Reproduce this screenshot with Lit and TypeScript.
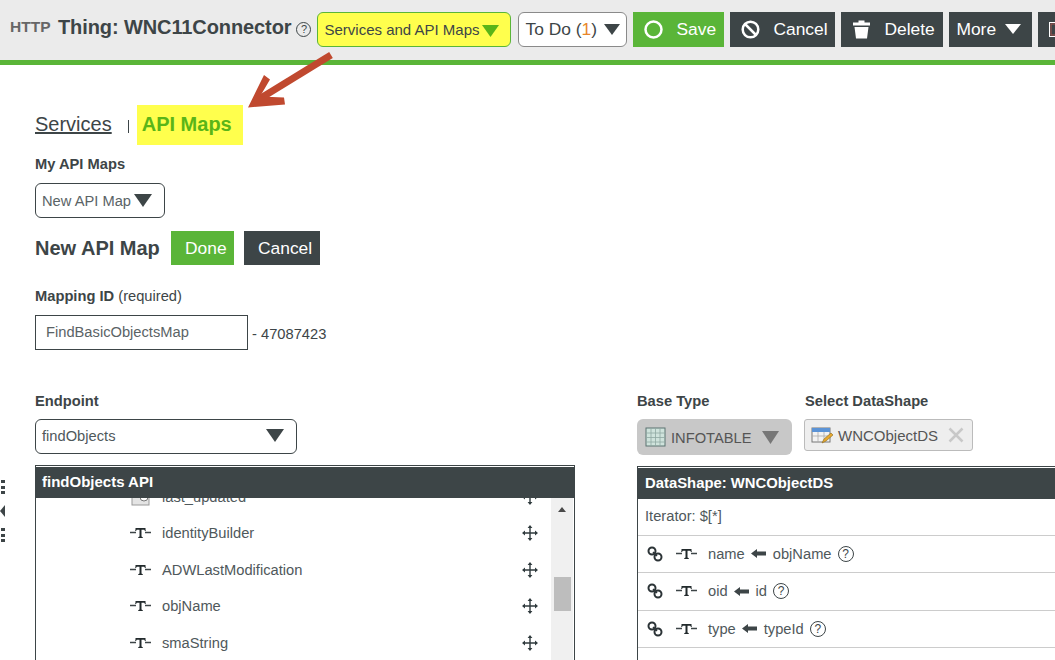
import { LitElement, html, css, svg } from "lit";
import { customElement } from "lit/decorators.js";

const tIcon = html`<svg class="ti" width="21" height="12" viewBox="0 0 21 12"><path d="M0 5.500h6M15 5.500h6" stroke="#3d4547" stroke-width="1.500"/><path d="M5.500 1h10v1.200l.3 1.800h-.8l-.8-1.200h-2.700v6.700l1.300.7V11H8.200v-.8l1.300-.7V2.800H6.800L6 4h-.8l.3-1.800z" fill="#222a2c"/></svg>`;
const moveIcon = html`<svg class="mv" width="16" height="16" viewBox="0 0 16 16"><path d="M8 1.500v13M1.500 8h13" stroke="#2f3a3d" stroke-width="1.400"/><path d="M8 0l2.400 3H5.600zM8 16l-2.400-3h4.800zM0 8l3-2.400v4.800zM16 8l-3 2.400V5.600z" fill="#2f3a3d"/></svg>`;
const linkIcon = html`<svg class="lk" width="16" height="16" viewBox="0 0 16 16" fill="none" stroke="#2b3336" stroke-width="2"><circle cx="5" cy="5" r="3.500"/><circle cx="11" cy="11" r="3.500"/><path d="M6 6l4 4" stroke-width="1.500"/></svg>`;
const larrow = html`<svg class="la" width="15" height="9" viewBox="0 0 15 9"><path d="M0 4.500L6 0v2.500h9v4H6V9z" fill="#3d4547"/></svg>`;
const qIcon = (s = 16) => html`<span class="q" style="width:${s}px;height:${s}px;font-size:${s - 4}px">?</span>`;
const tri = (w: number, h: number, c: string) => html`<svg class="tri" width="${w}" height="${h}" viewBox="0 0 ${w} ${h}"><path d="M0 0H${w}L${w / 2} ${h}z" fill="${c}"/></svg>`;
const rows = ["identityBuilder", "ADWLastModification", "objName", "smaString"];
const mapped = [["name", "objName"], ["oid", "id"], ["type", "typeId"]];

@customElement("app-root")
export class AppRoot extends LitElement {
  static styles = css`
    :host { display: block; position: relative; width: 1055px; height: 660px; overflow: hidden; background: #fff; color: #3d4547; font: 14.7px "Liberation Sans", Arial, sans-serif; }
    .top { display: flex; align-items: center; height: 60px; box-sizing: border-box; background: #ebebeb; padding: 0 0 2px 10px; white-space: nowrap; }
    .bar { height: 5px; background: #5ab538; }
    .http { font-weight: 700; font-size: 15.5px; color: #666; width: 48px; margin-top: -5px; }
    .title { font-weight: 700; font-size: 20px; letter-spacing: -0.1px; color: #3d4547; margin-top: -3px; }
    .q { display: inline-flex; align-items: center; justify-content: center; box-sizing: border-box; border: 1px solid #3d4547; border-radius: 50%; line-height: 1; color: #3d4547; flex: none; }
    .top .q { margin: 0 6px 0 5px; }
    .sa { display: flex; align-items: center; gap: 2px; box-sizing: border-box; width: 194px; height: 35px; padding-left: 6px; background: #ffff4d; border: 1px solid #5ab538; border-radius: 6px; font-size: 15px; }
    .sa svg { margin-top: 3px; }
    .todo { display: flex; align-items: center; justify-content: space-between; box-sizing: border-box; width: 109px; height: 35px; margin-left: 7px; padding: 0 6px; background: #fff; border: 1px solid #8a8a8a; border-radius: 6px; font-size: 17.4px; }
    .todo b { font-weight: 400; color: #e8862a; }
    .btn { display: flex; align-items: center; box-sizing: border-box; height: 35px; margin-left: 6px; color: #fff; background: #3d4547; font-size: 17.4px; }
    .btn.green { background: #5ab538; }
    .btn svg { flex: none; }
    .save { width: 91px; padding-left: 11px; gap: 13px; }
    .cancel { width: 105px; padding-left: 11px; gap: 13px; }
    .delete { width: 102px; padding-left: 11px; gap: 13px; }
    .more { width: 83px; padding-left: 7px; gap: 9px; }
    .extra { width: 30px; padding-left: 11px; margin-right: -30px; flex: none; }
    .main { padding: 40px 0 0 35px; }
    .tabs { display: flex; align-items: center; height: 40px; }
    .tabs u { font-size: 20px; padding-bottom: 2px; }
    .sep { width: 1px; height: 13px; background: #3d4547; margin: 2px 8px 0 16px; }
    .hl { display: flex; align-items: center; box-sizing: border-box; width: 106px; height: 40px; padding: 0 0 2px 5px; background: #ffff4d; color: #5ab518; font-size: 20px; font-weight: 700; }
    .lbl { font-weight: 700; font-size: 14.7px; line-height: 16px; }
    .lbl span { font-weight: 400; }
    .my { margin-top: 11px; }
    .sel { display: flex; align-items: center; box-sizing: border-box; height: 35px; border: 1px solid #3d4547; border-radius: 6px; padding: 0 6px; background: #fff; margin-top: 11px; }
    .sel.one { width: 130px; gap: 3px; color: #5a6366; }
    .newrow { display: flex; align-items: center; height: 34px; margin-top: 13px; }
    .newrow h2 { margin: 0; font-size: 20px; font-weight: 700; width: 136px; }
    .b2 { display: flex; align-items: center; box-sizing: border-box; padding-left: 14px; height: 34px; color: #fff; font-size: 17.4px; background: #3d4547; width: 76px; margin-left: 10px; }
    .b2.green { background: #5ab538; width: 63px; margin-left: 0; }
    .map { margin-top: 23px; }
    .idrow { display: flex; align-items: center; margin-top: 11px; }
    .input { display: flex; align-items: center; box-sizing: border-box; width: 213px; height: 35px; border: 1px solid #3d4547; padding-left: 10px; padding-bottom: 2px; color: #5a6366; }
    .suffix { margin: 3px 0 0 4px; }
    .cols { display: grid; grid-template-columns: 540px 430px; column-gap: 62px; margin-top: 43px; }
    .cols .sel { margin-top: 10px; }
    .sel.ep { width: 262px; justify-content: space-between; padding-right: 12px; color: #4f585b; padding-bottom: 2px; }
    .heads { display: flex; }
    .heads > div:first-child { width: 168px; }
    .chips { display: flex; align-items: flex-start; margin-top: 10px; gap: 12px; height: 36px; }
    .pill { display: flex; align-items: center; box-sizing: border-box; width: 155px; height: 36px; padding-left: 8px; background: #c8c8c8; border-radius: 6px; color: #555; gap: 5px; }
    .pill span { margin-right: 5px; margin-top: 2px; }
    .chip { display: flex; align-items: center; box-sizing: border-box; width: 169px; height: 32px; padding-left: 6px; gap: 5px; background: #eee; border: 1px solid #bbb; border-radius: 3px; color: #555; font-size: 15px; }
    .panel { box-sizing: border-box; height: 200px; margin-top: 11px; border: 1px solid #3d4547; border-bottom: 0; padding: 1px 0 0; overflow: hidden; }
    .phead { display: flex; align-items: center; height: 30.500px; padding: 0 6px 1px; background: #3d4547; color: #fff; font-weight: 700; font-size: 15px; box-sizing: border-box; position: relative; z-index: 1; }
    .phead.r { padding-left: 7px; font-size: 14.850px; }
    .treewrap { display: flex; height: 170px; }
    .tree { flex: 1; overflow: hidden; }
    .trow { display: flex; align-items: center; height: 36.500px; padding-left: 94px; gap: 11px; color: #4f585b; }
    .trow.cut { margin-top: -18.900px; }
    .trow span { flex: 1; }
    .trow .mv { margin-right: 13px; }
    .sb { position: relative; width: 22px; box-sizing: border-box; background: #f0f0f0; display: flex; flex-direction: column; align-items: center; padding-top: 9px; margin-right: 1px; }
    .thumb { width: 17px; height: 34px; background: #bdbdbd; margin-top: 65px; }
    .up { width: 0; height: 0; border: 4.500px solid transparent; border-top: 0; border-bottom: 5px solid #4a4a4a; }
    .iter { display: flex; align-items: center; height: 37px; padding: 0 0 2px 7px; border-bottom: 1px solid #ccc; box-sizing: border-box; color: #4f585b; }
    .mrow { display: flex; align-items: center; height: 37.500px; box-sizing: border-box; border-bottom: 1px solid #ccc; padding-left: 9px; color: #4f585b; }
    .mrow .ti { margin: 0 11px 0 13px; }
    .mrow .la { margin: 0 7px 0 6px; }
    .mrow .q { margin-left: 6px; }
    .handle { position: absolute; left: 0; top: 480px; display: flex; flex-direction: column; align-items: flex-start; }
    .dots { display: flex; flex-direction: column; gap: 2.500px; }
    .dots i { width: 4px; height: 3px; margin-left: 1px; background: #3d4547; }
    .ltri { width: 0; height: 0; border: 6px solid transparent; border-left: 0; border-right: 5px solid #3d4547; margin: 11px 0; }
    .arrow { position: absolute; left: 240px; top: 48px; pointer-events: none; }
  `;

  render() {
    return html`
      <div class="top">
        <div class="http">HTTP</div>
        <div class="title">Thing: WNC11Connector</div>
        ${qIcon(15)}
        <div class="sa">Services and API Maps ${tri(17, 12, "#5ab518")}</div>
        <div class="todo"><span>To Do (<b>1</b>)</span>${tri(16, 11, "#3d4547")}</div>
        <div class="btn green save"><svg width="19" height="19" viewBox="0 0 19 19" fill="none" stroke="#fff" stroke-width="2.500"><circle cx="9.500" cy="9.500" r="8"/></svg>Save</div>
        <div class="btn cancel"><svg width="19" height="19" viewBox="0 0 19 19" fill="none" stroke="#fff" stroke-width="2.500"><circle cx="9.500" cy="9.500" r="7.800"/><path d="M4 4l11 11"/></svg>Cancel</div>
        <div class="btn delete"><svg width="19" height="20" viewBox="0 0 19 20"><path d="M1 3.500h17v3H1zM6.500 1.500h6v2h-6zM2.500 8h14l-1.500 11.500H4z" fill="#fff"/></svg>Delete</div>
        <div class="btn more">More ${tri(16, 10, "#fff")}</div>
        <div class="btn extra"><svg width="14" height="15" viewBox="0 0 14 15"><rect x=".5" y=".5" width="14" height="14" fill="#3d4547" stroke="#fff"/><rect x="2" y="2" width="12" height="11" fill="#3d4547" stroke="#a5554f"/></svg></div>
      </div>
      <div class="bar"></div>
      <div class="main">
        <div class="tabs"><u>Services</u><div class="sep"></div><div class="hl">API Maps</div></div>
        <div class="lbl my">My API Maps</div>
        <div class="sel one">New API Map ${tri(18, 13, "#3d4547")}</div>
        <div class="newrow"><h2>New API Map</h2><div class="b2 green">Done</div><div class="b2">Cancel</div></div>
        <div class="lbl map">Mapping ID <span>(required)</span></div>
        <div class="idrow"><div class="input">FindBasicObjectsMap</div><div class="suffix">- 47087423</div></div>
        <div class="cols">
          <div>
            <div class="lbl">Endpoint</div>
            <div class="sel ep">findObjects ${tri(18, 13, "#3d4547")}</div>
            <div class="panel">
              <div class="phead">findObjects API</div>
              <div class="treewrap">
                <div class="tree">
                  <div class="trow cut"><svg width="21" height="18" viewBox="0 0 21 18"><rect x="2" y="1" width="17" height="16" fill="#e4e4e4" stroke="#9a9a9a"/><circle cx="14" cy="9" r="4" fill="#fff" stroke="#777"/></svg><span>last_updated</span>${moveIcon}</div>
                  ${rows.map(r => html`<div class="trow">${tIcon}<span>${r}</span>${moveIcon}</div>`)}
                </div>
                <div class="sb"><div class="up"></div><div class="thumb"></div></div>
              </div>
            </div>
          </div>
          <div>
            <div class="heads"><div class="lbl">Base Type</div><div class="lbl">Select DataShape</div></div>
            <div class="chips">
              <div class="pill">
                <svg width="21" height="20" viewBox="0 0 21 20"><rect x="1" y="1" width="19" height="18" fill="#cfe3dc" stroke="#5b7270"/><path d="M1 6h19M1 10.500h19M1 15h19M6 1v18M10.500 1v18M15 1v18" stroke="#8fa8a2" stroke-width=".8"/></svg>
                <span>INFOTABLE</span>${tri(17, 13, "#777")}
              </div>
              <div class="chip">
                <svg width="22" height="19" viewBox="0 0 22 19"><rect x="1" y="2" width="18" height="14" fill="#f3f3f3" stroke="#777"/><rect x="1" y="2" width="18" height="4" fill="#5b93d6"/><path d="M1 10h18M7 6v10M13 6v10" stroke="#aaa" stroke-width=".8"/><path d="M11 17l2-4 7-6 2 2-7 6z" fill="#e8a92e" stroke="#8a6a1c" stroke-width=".6"/></svg>
                <span>WNCObjectDS</span>
                <svg style="margin-left:5px" width="16" height="16" viewBox="0 0 16 16"><path d="M1.500 1.500l13 13M14.500 1.500l-13 13" stroke="#c8c8c8" stroke-width="2.500"/></svg>
              </div>
            </div>
            <div class="panel">
              <div class="phead r">DataShape: WNCObjectDS</div>
              <div class="iter">Iterator: $[*]</div>
              ${mapped.map(([a, b]) => html`<div class="mrow">${linkIcon}${tIcon}<span>${a}</span>${larrow}<span>${b}</span>${qIcon(16)}</div>`)}
            </div>
          </div>
        </div>
      </div>
      <div class="handle">
        <div class="dots"><i></i><i></i><i></i></div>
        <div class="ltri"></div>
        <div class="dots"><i></i><i></i><i></i></div>
      </div>
      <svg class="arrow" width="100" height="70" viewBox="240 48 100 70">
        ${svg`<path d="M331 55L256 101" stroke="#c0492f" stroke-width="7" fill="none"/><path d="M248 107.500L264 75l6 4.500-10 17 24 1 1 7z" fill="#c0492f"/>`}
      </svg>
    `;
  }
}
